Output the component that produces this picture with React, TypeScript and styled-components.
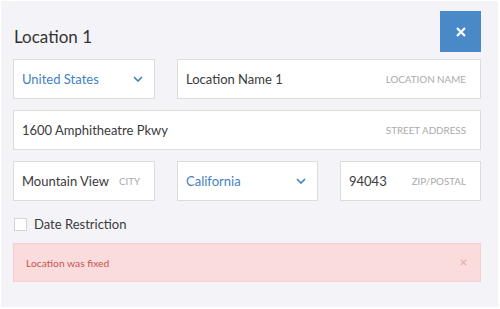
import * as React from "react"
import styled, { createGlobalStyle } from "styled-components"

const Global = createGlobalStyle`
  html, body {
    margin: 0;
    background: #fff;
  }
  body {
    font-family: Lato, "Open Sans", sans-serif;
  }
`

const Panel = styled.div`
  margin: 1px;
  width: 497px;
  height: 306px;
  box-sizing: border-box;
  background: #f4f4f8;
  padding: 10px 17px 0 12px;
`

const Header = styled.div`
  display: flex;
  justify-content: space-between;
  align-items: center;
  height: 41px;
`

const Title = styled.h2`
  margin: 0 0 0 1px;
  padding-top: 9px;
  font-size: 17px;
  font-weight: 400;
  color: #333;
`

const CloseButton = styled.button`
  width: 41px;
  height: 41px;
  border: 0;
  background: #4a89c8;
  display: flex;
  align-items: center;
  justify-content: center;
  padding: 0;
`

const Form = styled.div`
  display: grid;
  grid-template-columns: 142px 141px 141px;
  column-gap: 22px;
  row-gap: 11px;
  margin-top: 7px;
`

const Field = styled.div<{ $span?: number; $select?: boolean }>`
  grid-column: span ${(p) => p.$span ?? 1};
  height: 40px;
  box-sizing: border-box;
  background: #fff;
  border: 1px solid #dcdcdf;
  display: flex;
  align-items: center;
  padding: 0 ${(p) => (p.$select ? 11 : 14)}px 0 8px;
  gap: 10px;
`

const Value = styled.span<{ $blue?: boolean; $fill?: boolean }>`
  font-size: 13px;
  color: ${(p) => (p.$blue ? "#3f7fc4" : "#3a3a3a")};
  flex: ${(p) => (p.$fill === false ? "none" : 1)};
  white-space: nowrap;
`

const Hint = styled.span`
  font-size: 9.8px;
  color: #aaa;
  white-space: nowrap;
`

const CheckRow = styled.label`
  display: flex;
  align-items: center;
  gap: 7px;
  margin: 15px 0 0 1px;
  font-size: 13px;
  color: #3a3a3a;
`

const Box = styled.span`
  width: 11px;
  height: 11px;
  border: 1px solid #d4d4d8;
  background: #fff;
`

const Alert = styled.div`
  margin-top: 11px;
  height: 39px;
  box-sizing: border-box;
  background: #fadcdd;
  border: 1px solid #f6cfd3;
  display: flex;
  align-items: center;
  justify-content: space-between;
  padding: 0 13px 0 12px;
  font-size: 10.3px;
  color: #c9534f;
`

const Chevron = () => (
  <svg width="10" height="6" viewBox="0 0 10 6">
    <path d="M1 1l4 4 4-4" fill="none" stroke="#3f7fc4" strokeWidth="1.6" />
  </svg>
)

const Cross = ({ size, color, w }: { size: number; color: string; w: number }) => (
  <svg width={size} height={size} viewBox="0 0 10 10">
    <path d="M1 1l8 8M9 1l-8 8" stroke={color} strokeWidth={w} />
  </svg>
)

export default function App() {
  return (
    <>
      <Global />
      <Panel>
        <Header>
          <Title>Location 1</Title>
          <CloseButton>
            <Cross size={10} color="#fff" w={2.2} />
          </CloseButton>
        </Header>
        <Form>
          <Field $select>
            <Value $blue>United States</Value>
            <Chevron />
          </Field>
          <Field $span={2}>
            <Value>Location Name 1</Value>
            <Hint>LOCATION NAME</Hint>
          </Field>
          <Field $span={3}>
            <Value>1600 Amphitheatre Pkwy</Value>
            <Hint>STREET ADDRESS</Hint>
          </Field>
          <Field>
            <Value $fill={false}>Mountain View</Value>
            <Hint>CITY</Hint>
          </Field>
          <Field $select>
            <Value $blue>California</Value>
            <Chevron />
          </Field>
          <Field>
            <Value>94043</Value>
            <Hint>ZIP/POSTAL</Hint>
          </Field>
        </Form>
        <CheckRow>
          <Box />
          Date Restriction
        </CheckRow>
        <Alert>
          Location was fixed
          <Cross size={7} color="#e9a9b0" w={1.6} />
        </Alert>
      </Panel>
    </>
  )
}
